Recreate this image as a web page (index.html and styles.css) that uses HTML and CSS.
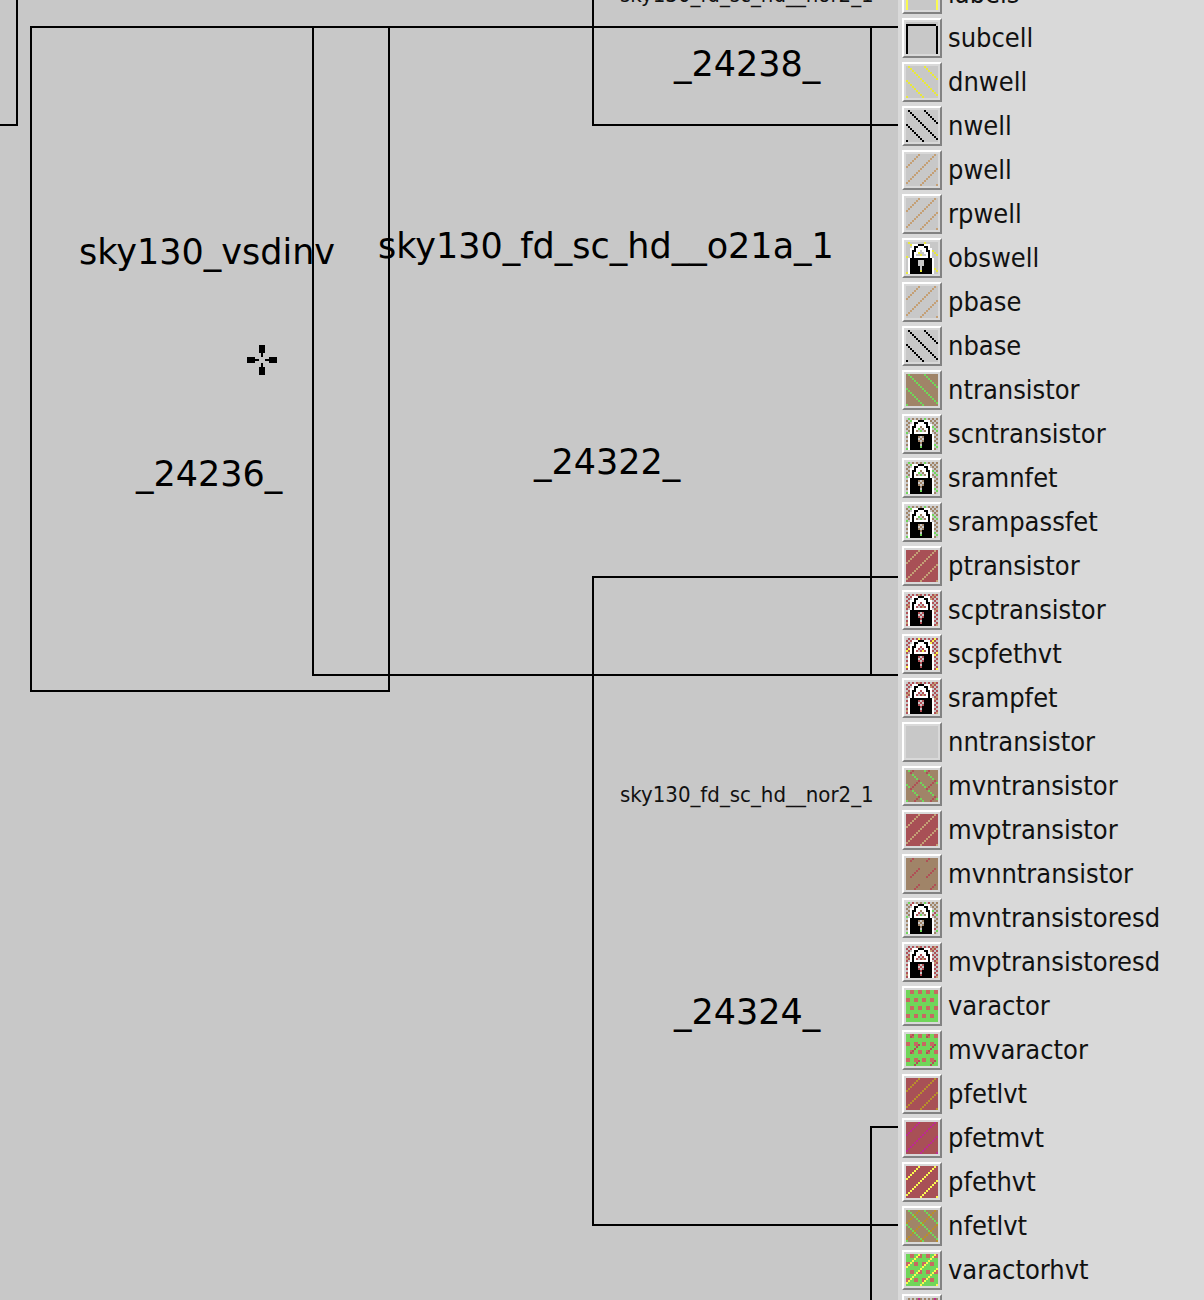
FILE: index.html
```html
<!DOCTYPE html>
<html lang="en">
<head>
<meta charset="utf-8">
<title>Layout editor</title>
<link rel="stylesheet" href="styles.css">
</head>
<body>
<!-- Fill patterns on a 16 by 16 pixel grid -->
<svg class="defs" aria-hidden="true">
  <defs>
    <path id="outline" d="M0 1h15v1h-14v14h-1zM15 2h1v14h-1z"/>
    <path id="down-tile" d="M1 0h1v1h-1zM2 1h1v1h-1zM3 2h1v1h-1zM4 3h1v1h-1zM5 4h1v1h-1zM6 5h1v1h-1zM7 6h1v1h-1zM0 7h1v1h-1z"/>
    <path id="up-tile" d="M6 0h1v1h-1zM5 1h1v1h-1zM4 2h1v1h-1zM3 3h1v1h-1zM2 4h1v1h-1zM1 5h1v1h-1zM0 6h1v1h-1zM7 7h1v1h-1z"/>
    <path id="dash-tile" d="M3 0h1v1h-1zM2 1h1v1h-1zM6 5h1v1h-1zM5 6h1v1h-1zM4 7h1v1h-1z"/>
    <path id="dots-tile" d="M2 0h2v2h-2zM6 0h2v2h-2zM0 4h2v2h-2zM4 4h2v2h-2z"/>
    <g id="down"><use href="#down-tile"/><use href="#down-tile" x="8"/><use href="#down-tile" y="8"/><use href="#down-tile" x="8" y="8"/></g>
    <g id="up"><use href="#up-tile"/><use href="#up-tile" x="8"/><use href="#up-tile" y="8"/><use href="#up-tile" x="8" y="8"/></g>
    <g id="dash"><use href="#dash-tile"/><use href="#dash-tile" x="8"/><use href="#dash-tile" y="8"/><use href="#dash-tile" x="8" y="8"/></g>
    <g id="dots"><use href="#dots-tile"/><use href="#dots-tile" x="8"/><use href="#dots-tile" y="8"/><use href="#dots-tile" x="8" y="8"/></g>
    <path id="stipple" fill="none" stroke="currentColor" stroke-dasharray="1 1" d="M1 .5h15M0 1.5h16M1 2.5h15M0 3.5h16M1 4.5h15M0 5.5h16M1 6.5h15M0 7.5h16M1 8.5h15M0 9.5h16M1 10.5h15M0 11.5h16M1 12.5h15M0 13.5h16M1 14.5h15M0 15.5h16"/>
    <g id="lock">
      <path fill="#fff" fill-rule="evenodd" d="M3 1h9v2h1v5h1v8h-13v-8h1v-5h1zM7 4v1h-1v1h-1v1h5v-1h-1v-1h-1v-1zM6 9v3h1v3h1v-3h1v-3z"/>
      <path d="M6 1h3v1h2v2h1v4h1v8h-11v-8h1v-4h1v-2h2zM6 2v1h-1v2h-1v3h7v-3h-1v-2h-1v-1zM6 9v3h1v3h1v-3h1v-3z" fill="#000" fill-rule="evenodd"/>
    </g>
  </defs>
</svg>

<main class="editor">
  <section class="canvas" aria-label="Layout view">
    <div class="cell cell-left"></div>
    <div class="cell cell-24236"></div>
    <div class="cell cell-24322"></div>
    <div class="cell cell-24238"></div>
    <div class="cell cell-24324"></div>
    <div class="cell cell-right"></div>
    <div class="cell cell-lower"></div>
    <span class="tag small tag-nor-top">sky130_fd_sc_hd__nor2_1</span>
    <span class="tag tag-24238">_24238_</span>
    <span class="tag tag-vsdinv">sky130_vsdinv</span>
    <span class="tag tag-24236">_24236_</span>
    <span class="tag tag-o21a">sky130_fd_sc_hd__o21a_1</span>
    <span class="tag tag-24322">_24322_</span>
    <span class="tag small tag-nor">sky130_fd_sc_hd__nor2_1</span>
    <span class="tag tag-24324">_24324_</span>
    <svg class="cursor" viewBox="0 0 15 15" aria-hidden="true"><path d="M6 0h3v4h-1v2h-1v-2h-1zM0 6h4v1h2v1h-2v1h-4zM15 6h-4v1h-2v1h2v1h4zM7 9h1v2h1v4h-3v-4h1z"/></svg>
  </section>

  <aside class="palette" aria-label="Layers">
    <ul class="layers">
      <li><button id="l0"><svg viewBox="0 0 16 16"><use href="#outline" class="yellow"/></svg></button><label for="l0">labels</label></li>
      <li><button id="l1"><svg viewBox="0 0 16 16"><use href="#outline" class="black"/></svg></button><label for="l1">subcell</label></li>
      <li><button id="l2"><svg viewBox="0 0 16 16"><use href="#down" class="well"/></svg></button><label for="l2">dnwell</label></li>
      <li><button id="l3"><svg viewBox="0 0 16 16"><use href="#down" class="black"/></svg></button><label for="l3">nwell</label></li>
      <li><button id="l4"><svg viewBox="0 0 16 16"><use href="#up" class="tan"/></svg></button><label for="l4">pwell</label></li>
      <li><button id="l5"><svg viewBox="0 0 16 16"><use href="#up" class="tan"/></svg></button><label for="l5">rpwell</label></li>
      <li><button id="l6"><svg viewBox="0 0 16 16"><use href="#down" class="well"/><use href="#lock"/></svg></button><label for="l6">obswell</label></li>
      <li><button id="l7"><svg viewBox="0 0 16 16"><use href="#up" class="tan"/></svg></button><label for="l7">pbase</label></li>
      <li><button id="l8"><svg viewBox="0 0 16 16"><use href="#down" class="black"/></svg></button><label for="l8">nbase</label></li>
      <li><button id="l9"><svg viewBox="0 0 16 16" class="on-brown"><use href="#down" class="green"/></svg></button><label for="l9">ntransistor</label></li>
      <li><button id="l10"><svg viewBox="0 0 16 16"><use href="#stipple" class="brown"/><use href="#down" class="green"/><use href="#lock"/></svg></button><label for="l10">scntransistor</label></li>
      <li><button id="l11"><svg viewBox="0 0 16 16"><use href="#stipple" class="brown"/><use href="#down" class="green"/><use href="#lock"/></svg></button><label for="l11">sramnfet</label></li>
      <li><button id="l12"><svg viewBox="0 0 16 16"><use href="#stipple" class="brown"/><use href="#down" class="green"/><use href="#lock"/></svg></button><label for="l12">srampassfet</label></li>
      <li><button id="l13"><svg viewBox="0 0 16 16" class="on-red"><use href="#up" class="tan"/></svg></button><label for="l13">ptransistor</label></li>
      <li><button id="l14"><svg viewBox="0 0 16 16"><use href="#stipple" class="red"/><use href="#up" class="tan"/><use href="#lock"/></svg></button><label for="l14">scptransistor</label></li>
      <li><button id="l15"><svg viewBox="0 0 16 16"><use href="#stipple" class="red"/><use href="#up" class="yellow"/><use href="#lock"/></svg></button><label for="l15">scpfethvt</label></li>
      <li><button id="l16"><svg viewBox="0 0 16 16"><use href="#stipple" class="red"/><use href="#up" class="tan"/><use href="#lock"/></svg></button><label for="l16">srampfet</label></li>
      <li><button id="l17"><svg viewBox="0 0 16 16"></svg></button><label for="l17">nntransistor</label></li>
      <li><button id="l18"><svg viewBox="0 0 16 16" class="on-brown"><use href="#down" class="green"/><use href="#dash" class="red"/></svg></button><label for="l18">mvntransistor</label></li>
      <li><button id="l19"><svg viewBox="0 0 16 16" class="on-red"><use href="#up" class="tan"/></svg></button><label for="l19">mvptransistor</label></li>
      <li><button id="l20"><svg viewBox="0 0 16 16" class="on-brown"><use href="#dash" class="red"/></svg></button><label for="l20">mvnntransistor</label></li>
      <li><button id="l21"><svg viewBox="0 0 16 16"><use href="#stipple" class="brown"/><use href="#down" class="green"/><use href="#dash" class="red"/><use href="#lock"/></svg></button><label for="l21">mvntransistoresd</label></li>
      <li><button id="l22"><svg viewBox="0 0 16 16"><use href="#stipple" class="red"/><use href="#up" class="tan"/><use href="#lock"/></svg></button><label for="l22">mvptransistoresd</label></li>
      <li><button id="l23"><svg viewBox="0 0 16 16" class="on-green"><use href="#dots" class="coral"/></svg></button><label for="l23">varactor</label></li>
      <li><button id="l24"><svg viewBox="0 0 16 16" class="on-green"><use href="#dots" class="coral"/><use href="#dash" class="red"/></svg></button><label for="l24">mvvaractor</label></li>
      <li><button id="l25"><svg viewBox="0 0 16 16" class="on-red"><use href="#up" class="olive"/></svg></button><label for="l25">pfetlvt</label></li>
      <li><button id="l26"><svg viewBox="0 0 16 16" class="on-red"><use href="#up" class="magenta"/></svg></button><label for="l26">pfetmvt</label></li>
      <li><button id="l27"><svg viewBox="0 0 16 16" class="on-red"><use href="#up" class="yellow"/></svg></button><label for="l27">pfethvt</label></li>
      <li><button id="l28"><svg viewBox="0 0 16 16" class="on-brown"><use href="#up" class="olive"/><use href="#down" class="green"/></svg></button><label for="l28">nfetlvt</label></li>
      <li><button id="l29"><svg viewBox="0 0 16 16" class="on-green"><use href="#dots" class="coral"/><use href="#up" class="yellow"/></svg></button><label for="l29">varactorhvt</label></li>
      <li><button aria-label="Locked layer"><svg viewBox="0 0 16 16"><use href="#stipple" class="brown"/><use href="#up" class="magenta"/><use href="#lock"/></svg></button></li>
    </ul>
  </aside>
</main>
</body>
</html>
```
FILE: styles.css
```css
* { box-sizing: border-box; }

body {
  margin: 0;
  background: #d9d9d9;
  color: #111;
}

.defs { position: absolute; width: 0; height: 0; }

.editor {
  display: flex;
  height: 100vh;
  overflow: hidden;
}

/* Drawing area */
.canvas {
  position: relative;
  flex: 1;
  overflow: hidden;
  background: #c8c8c8;
  color: #000;
}

.cell { position: absolute; border: 2px solid #000; }
.cell-left { left: -260px; top: -524px; width: 278px; height: 650px; }
.cell-24236 { left: 30px; top: 26px; width: 360px; height: 666px; }
.cell-24322 { left: 312px; top: 26px; width: 560px; height: 650px; }
.cell-24238 { left: 592px; top: -524px; width: 480px; height: 650px; }
.cell-24324 { left: 592px; top: 576px; width: 480px; height: 650px; }
.cell-right { left: 870px; top: 26px; width: 480px; height: 650px; }
.cell-lower { left: 870px; top: 1126px; width: 480px; height: 650px; }

.tag {
  position: absolute;
  font: 35px/40px "DejaVu Sans", sans-serif;
  white-space: nowrap;
}
.small {
  font: 22px/26px "DejaVu Sans Condensed", "DejaVu Sans", sans-serif;
  color: #111;
}
.tag-nor-top { left: 620px; top: -18px; }
.tag-24238 { left: 674px; top: 44px; }
.tag-vsdinv { left: 79px; top: 232px; }
.tag-24236 { left: 136px; top: 454px; }
.tag-o21a { left: 378px; top: 226px; }
.tag-24322 { left: 534px; top: 442px; }
.tag-nor { left: 620px; top: 782px; }
.tag-24324 { left: 674px; top: 992px; }

.cursor { position: absolute; left: 247px; top: 345px; width: 30px; height: 30px; }

/* Layer palette, scrolled part of the way down */
.palette {
  flex: 0 0 306px;
  overflow: hidden;
  background: #d9d9d9;
}

.layers {
  list-style: none;
  margin: -28px 0 0;
  padding: 0 0 0 4px;
}

.layers li {
  display: flex;
  align-items: center;
  gap: 6px;
  height: 44px;
}

.layers button {
  width: 40px;
  height: 40px;
  padding: 2px;
  background: #d9d9d9;
  border: 2px solid;
  border-color: #fff #828282 #828282 #fff;
}

.layers svg {
  display: block;
  width: 32px;
  height: 32px;
  background: #c8c8c8;
  shape-rendering: crispEdges;
}

.layers label {
  padding-bottom: 1px;
  font: 27px/32px "DejaVu Sans Condensed", "DejaVu Sans", sans-serif;
}

.layers .on-brown { background: #a08468; }
.layers .on-red { background: #a85056; }
.layers .on-green { background: #70d65a; }

.black { fill: #000; color: #000; }
.yellow { fill: #fafa50; color: #fafa50; }
.well { fill: #e8e83c; color: #e8e83c; }
.tan { fill: #c4a076; color: #c4a076; }
.brown { fill: #a08468; color: #a08468; }
.green { fill: #70d65a; color: #70d65a; }
.red { fill: #b05056; color: #b05056; }
.coral { fill: #c86862; color: #c86862; }
.olive { fill: #b88e2c; color: #b88e2c; }
.magenta { fill: #bc2c8e; color: #bc2c8e; }
```
